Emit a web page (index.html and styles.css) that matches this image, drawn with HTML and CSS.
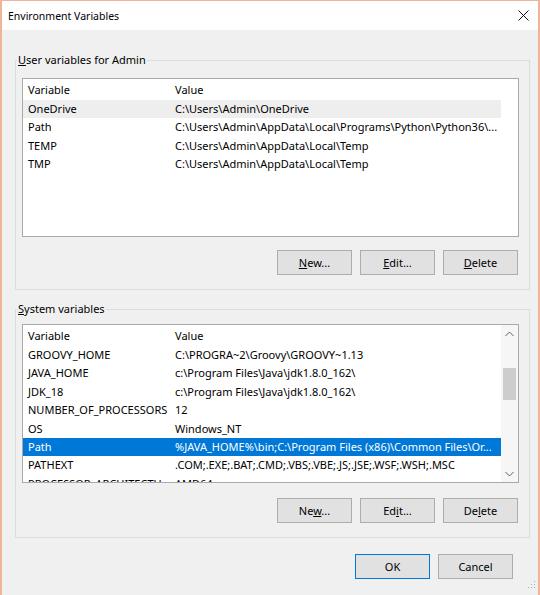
FILE: index.html
```html
<!DOCTYPE html>
<html lang="en">
<head>
  <meta charset="UTF-8">
  <title>Environment Variables</title>
  <link rel="stylesheet" href="styles.css">
</head>
<body>
  <div class="window">
    <div class="titlebar">
      <span class="title">Environment Variables</span>
      <svg class="close" width="11" height="11" viewBox="0 0 11 11">
        <path d="M0.5 0.5L10.5 10.5M10.5 0.5L0.5 10.5" stroke="#111" stroke-width="1"/>
      </svg>
    </div>

    <div class="content">
      <!-- User variables -->
      <fieldset class="group user">
        <legend><u>U</u>ser variables for Admin</legend>
        <div class="list">
          <div class="rows">
            <div class="row head"><span class="col-var">Variable</span><span class="col-val">Value</span></div>
            <div class="row inactive"><span class="col-var">OneDrive</span><span class="col-val">C:\Users\Admin\OneDrive</span></div>
            <div class="row"><span class="col-var">Path</span><span class="col-val">C:\Users\Admin\AppData\Local\Programs\Python\Python36\...</span></div>
            <div class="row"><span class="col-var">TEMP</span><span class="col-val">C:\Users\Admin\AppData\Local\Temp</span></div>
            <div class="row"><span class="col-var">TMP</span><span class="col-val">C:\Users\Admin\AppData\Local\Temp</span></div>
          </div>
        </div>
        <div class="buttons">
          <button class="btn"><u>N</u>ew...</button>
          <button class="btn"><u>E</u>dit...</button>
          <button class="btn"><u>D</u>elete</button>
        </div>
      </fieldset>

      <!-- System variables -->
      <fieldset class="group system">
        <legend><u>S</u>ystem variables</legend>
        <div class="list">
          <div class="rows">
            <div class="row head"><span class="col-var">Variable</span><span class="col-val">Value</span></div>
            <div class="row"><span class="col-var">GROOVY_HOME</span><span class="col-val">C:\PROGRA~2\Groovy\GROOVY~1.13</span></div>
            <div class="row"><span class="col-var">JAVA_HOME</span><span class="col-val">c:\Program Files\Java\jdk1.8.0_162\</span></div>
            <div class="row"><span class="col-var">JDK_18</span><span class="col-val">c:\Program Files\Java\jdk1.8.0_162\</span></div>
            <div class="row"><span class="col-var">NUMBER_OF_PROCESSORS</span><span class="col-val">12</span></div>
            <div class="row"><span class="col-var">OS</span><span class="col-val">Windows_NT</span></div>
            <div class="row selected"><span class="col-var">Path</span><span class="col-val">%JAVA_HOME%\bin;C:\Program Files (x86)\Common Files\Or...</span></div>
            <div class="row"><span class="col-var">PATHEXT</span><span class="col-val">.COM;.EXE;.BAT;.CMD;.VBS;.VBE;.JS;.JSE;.WSF;.WSH;.MSC</span></div>
            <div class="row"><span class="col-var">PROCESSOR_ARCHITECTU...</span><span class="col-val">AMD64</span></div>
          </div>
          <div class="scrollbar">
            <div class="arrow">
              <svg width="9" height="6" viewBox="0 0 9 6"><path d="M0.5 5L4.5 1L8.5 5" fill="none" stroke="#606060"/></svg>
            </div>
            <div class="track"><div class="thumb"></div></div>
            <div class="arrow">
              <svg width="9" height="6" viewBox="0 0 9 6"><path d="M0.5 1L4.5 5L8.5 1" fill="none" stroke="#606060"/></svg>
            </div>
          </div>
        </div>
        <div class="buttons">
          <button class="btn">Ne<u>w</u>...</button>
          <button class="btn">Ed<u>i</u>t...</button>
          <button class="btn">De<u>l</u>ete</button>
        </div>
      </fieldset>

      <div class="dialog-buttons">
        <button class="btn default">OK</button>
        <button class="btn">Cancel</button>
      </div>
    </div>

    <svg class="grip" width="10" height="10" viewBox="0 0 10 10">
      <rect x="8" y="0" width="1" height="1" fill="#aaa"/>
      <rect x="5" y="3" width="1" height="1" fill="#aaa"/>
      <rect x="8" y="3" width="1" height="1" fill="#aaa"/>
      <rect x="2" y="6" width="1" height="1" fill="#aaa"/>
      <rect x="5" y="6" width="1" height="1" fill="#aaa"/>
      <rect x="8" y="6" width="1" height="1" fill="#aaa"/>
    </svg>
  </div>
</body>
</html>
```

FILE: styles.css
```css
:root {
  --face: #f0f0f0;
  --btn: #e1e1e1;
  --btn-border: #adadad;
  --accent: #0078d7;
  --group-line: #dcdcdc;
  --list-border: #a9a9a9;
}
* { box-sizing: border-box; margin: 0; padding: 0; }
body {
  font-family: "Noto Sans", sans-serif;
  font-size: 11px;
  color: #000;
  background-color: var(--face);
}
.window {
  position: relative;
  height: 595px;
  border: solid #efb597;
  border-width: 1px 2px 0 2px;
  background-color: var(--face);
}
.titlebar {
  height: 29px;
  background-color: #fff;
  display: flex;
  align-items: center;
  justify-content: space-between;
  padding: 0 9px 0 6px;
}
.title { font-size: 10.5px; }
.close { margin-top: -1px; }
.content {
  padding: 22px 8px 0 13px;
}
.group {
  border: 1px solid var(--group-line);
  padding: 10px 10px 14px 6px;
}
.group.system {
  margin-top: 11px;
  padding-top: 7px;
}
legend {
  line-height: 16px;
  padding: 0 1px;
  margin-left: -5px;
}
.list {
  display: flex;
  height: 159px;
  border: 1px solid var(--list-border);
  background-color: #fff;
  overflow: hidden;
}
.rows { width: 478px; }
.row {
  display: flex;
  height: 18.4px;
  line-height: 18px;
  white-space: nowrap;
}
.row.head { height: 21px; line-height: 22px; }
.row.inactive { background-color: #eeeeee; }
.row.selected { background-color: var(--accent); color: #fff; }
.col-var {
  width: 147px;
  padding-left: 5px;
  overflow: hidden;
}
.col-val {
  flex: 1;
  padding-left: 5px;
  overflow: hidden;
}
.scrollbar {
  width: 17px;
  display: flex;
  flex-direction: column;
  background-color: #f6f6f6;
}
.arrow {
  height: 17px;
  display: flex;
  align-items: center;
  justify-content: center;
}
.track { flex: 1; padding: 26px 2px 0 2px; }
.thumb { height: 32px; background-color: #cdcdcd; }
.buttons {
  display: flex;
  justify-content: flex-end;
  gap: 8px;
  margin-top: 13px;
  padding-right: 1px;
}
.system .buttons { margin-top: 15px; }
.btn {
  width: 75px;
  height: 25px;
  font-family: inherit;
  font-size: 11px;
  color: #000;
  background-color: var(--btn);
  border: 1px solid var(--btn-border);
}
.btn.default { border-color: var(--accent); }
.dialog-buttons {
  display: flex;
  justify-content: flex-end;
  gap: 8px;
  margin-top: 16px;
  padding-right: 17px;
}
.grip {
  position: absolute;
  right: 2px;
  bottom: 4px;
}
```
